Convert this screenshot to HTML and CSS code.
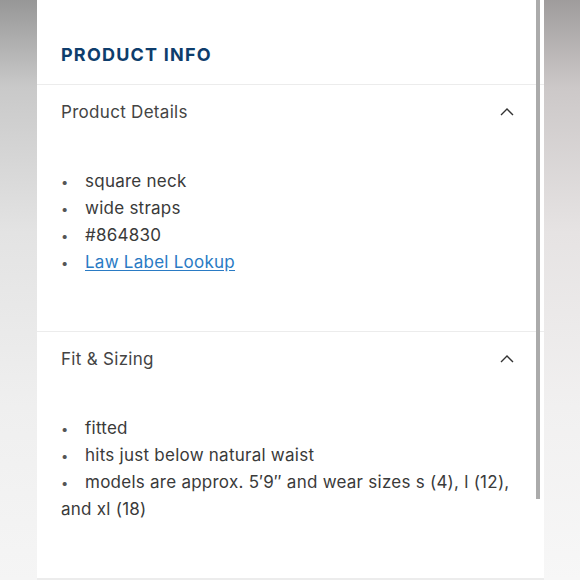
FILE: index.html
```html
<!DOCTYPE html>
<html>
<head>
<meta charset="utf-8">
<link rel="stylesheet" href="styles.css">
</head>
<body>
<div class="page">
  <div class="side side-left"></div>
  <main class="panel">
    <h1 class="title">PRODUCT INFO</h1>
    <section class="section">
      <div class="section-head">
        <span class="section-name">Product Details</span>
        <svg class="chevron" width="14" height="8" viewBox="0 0 14 8"><path d="M1 7 L7 1 L13 7" fill="none" stroke="#333" stroke-width="1.4"/></svg>
      </div>
      <div class="section-body">
        <p class="item"><span class="dot">•</span>square neck</p>
        <p class="item"><span class="dot">•</span>wide straps</p>
        <p class="item"><span class="dot">•</span>#864830</p>
        <p class="item"><span class="dot">•</span><a class="link" href="#">Law Label Lookup</a></p>
      </div>
    </section>
    <section class="section last">
      <div class="section-head">
        <span class="section-name">Fit &amp; Sizing</span>
        <svg class="chevron" width="14" height="8" viewBox="0 0 14 8"><path d="M1 7 L7 1 L13 7" fill="none" stroke="#333" stroke-width="1.4"/></svg>
      </div>
      <div class="section-body">
        <p class="item"><span class="dot">•</span>fitted</p>
        <p class="item"><span class="dot">•</span>hits just below natural waist</p>
        <p class="item"><span class="dot">•</span>models are approx. 5′9″ and wear sizes s (4), l (12), and xl (18)</p>
      </div>
    </section>
    <div class="scrollbar"></div>
  </main>
  <div class="side side-right"></div>
</div>
</body>
</html>
```
FILE: styles.css
```css
html, body {
  margin: 0;
  padding: 0;
}
body {
  width: 580px;
  height: 580px;
  overflow: hidden;
  font-family: "Inter", "Liberation Sans", sans-serif;
}
.page {
  display: flex;
  width: 580px;
  height: 580px;
}
.side {
  height: 580px;
}
.side-left {
  width: 37px;
  background: linear-gradient(to bottom, #979797 0%, #c9c9c9 15%, #e3e3e3 40%, #efefef 70%, #f5f5f5 100%);
}
.side-right {
  width: 36px;
  background: linear-gradient(to bottom, #9f9c9c 0%, #ccc8c8 15%, #e6e3e3 40%, #f1f0f0 70%, #f7f7f7 100%);
}
.panel {
  position: relative;
  width: 507px;
  height: 578px;
  background: #fff;
  border-bottom: 2px solid #ececec;
}
.title {
  margin: 0;
  padding: 43px 24px 17px;
  height: 24px;
  line-height: 24px;
  font-size: 18px;
  font-weight: 700;
  letter-spacing: 1.2px;
  color: #0e3d6c;
}
.section {
  border-top: 1px solid #ececec;
}
.section-head {
  display: flex;
  align-items: center;
  justify-content: space-between;
  height: 51px;
  padding: 1px 30px 0 24px;
}
.section-name {
  font-size: 17px;
  color: #444;
  letter-spacing: 0.3px;
}
.chevron {
  display: block;
}
.section-body {
  padding: 31px 20px 55px 24px;
}
.item {
  margin: 0;
  font-size: 17px;
  line-height: 27px;
  color: #3a3a3a;
  letter-spacing: 0.25px;
}
.dot {
  display: inline-block;
  width: 24px;
  font-size: 13px;
  line-height: 1;
  color: #555;
}
.link {
  color: #2a7bc4;
  text-decoration: underline;
  text-underline-offset: 2px;
}
.scrollbar {
  position: absolute;
  top: 0;
  left: 499px;
  width: 4px;
  height: 499px;
  background: #ababab;
}
```
